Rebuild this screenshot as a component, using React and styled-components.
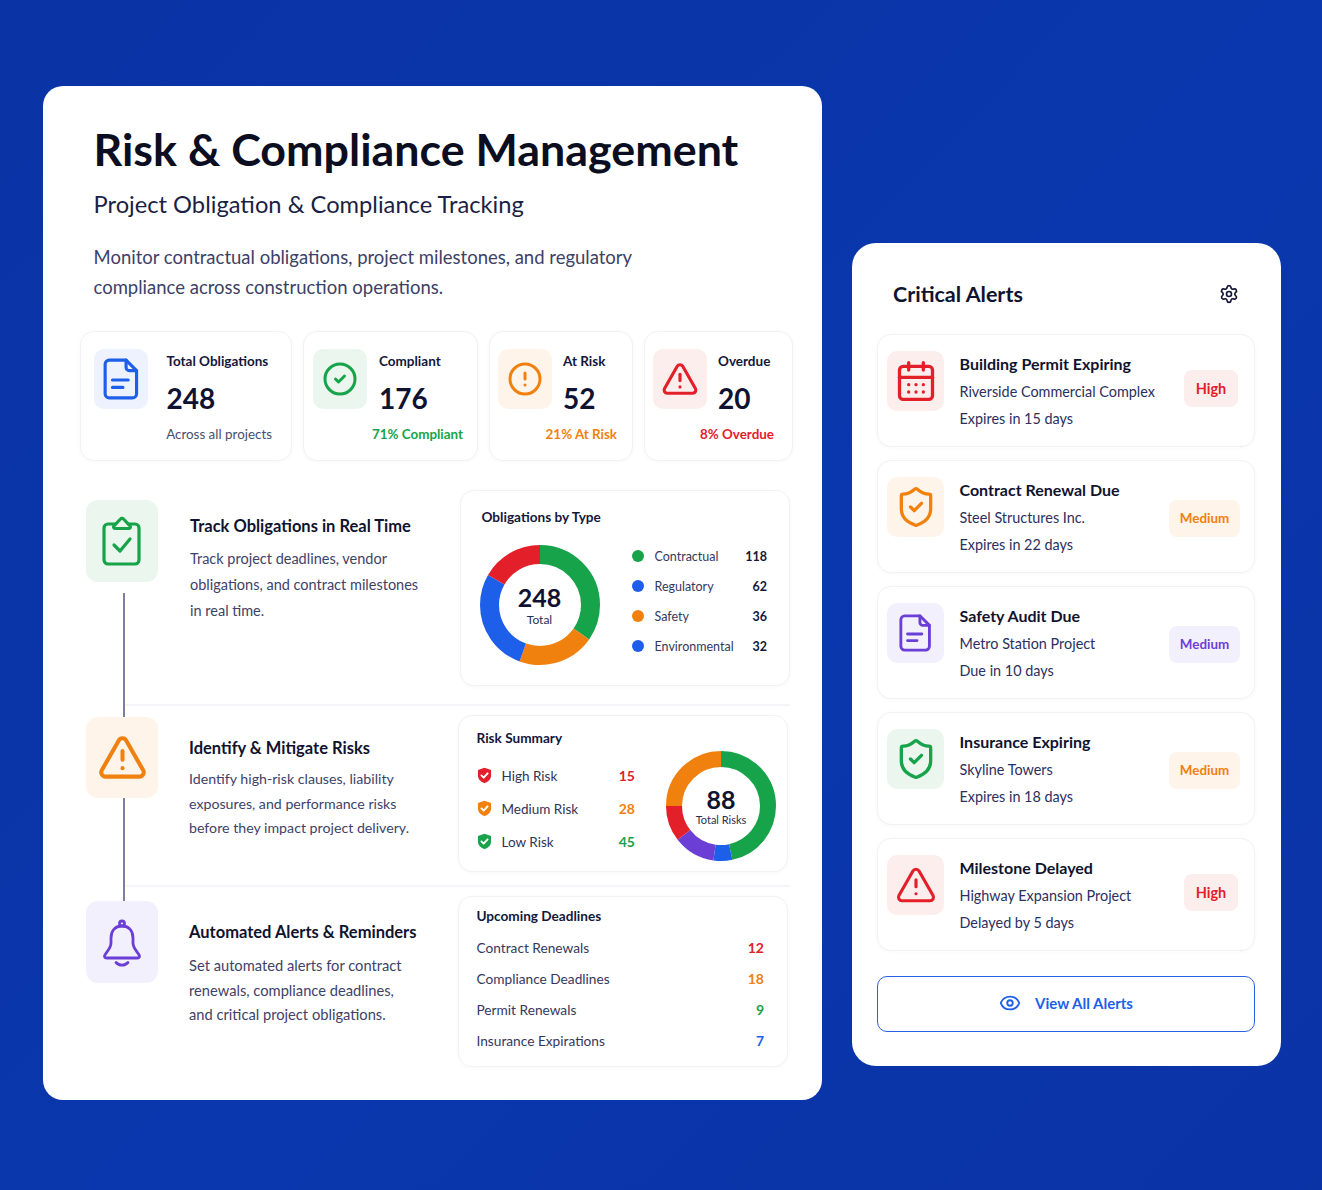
import React from 'react'
import styled, { createGlobalStyle } from 'styled-components'
import {
  CircleCheck, CircleAlert, TriangleAlert, CalendarDays, ShieldCheck, Settings, Eye,
} from 'lucide-react'

const GREEN = '#16a34a'
const BLUE = '#1d5fe8'
const ORANGE = '#f0810f'
const RED = '#e3202a'
const PURPLE = '#6b3fd6'

const tints = {
  blue: '#edf2fe',
  green: '#ebf6ef',
  orange: '#fef4ea',
  red: '#fdeeee',
  purple: '#f3f0fd',
}

function DocIcon({ size, color }) {
  return (
    <svg width={(size * 36) / 42} height={size} viewBox="0 0 36 42" fill="none" stroke={color} strokeWidth="3" strokeLinecap="round" strokeLinejoin="round">
      <path d="M7 3h16l10 10v22a4 4 0 0 1-4 4H7a4 4 0 0 1-4-4V7a4 4 0 0 1 4-4Z" />
      <path d="M23 3v7a3 3 0 0 0 3 3h7" />
      <path d="M10 22h15M10 29h10" />
    </svg>
  )
}

function ClipboardIcon({ color, tile }) {
  return (
    <svg width="50" height="50" viewBox="0 0 50 50" fill="none" stroke={color} strokeWidth="3.200" strokeLinecap="round" strokeLinejoin="round">
      <rect x="7" y="8" width="35" height="40" rx="4" />
      <path d="M18 12.500h14a1.500 1.500 0 0 0 1-2.600L26.500 3a2 2 0 0 0-3 0L17 9.900a1.500 1.500 0 0 0 1 2.600Z" fill={tile} />
      <path d="m17 29 6 6 10-12" />
    </svg>
  )
}

function BellIcon({ color }) {
  return (
    <svg width="50" height="50" viewBox="0 0 50 50" fill="none" stroke={color} strokeWidth="2.800" strokeLinecap="round" strokeLinejoin="round">
      <circle cx="25" cy="6.500" r="2.500" />
      <path d="M25 9c-8 0-11 6-11 12v5c0 6-6 10-6.500 13-.2 1.500 1 2 2.500 2h30c1.500 0 2.700-.5 2.500-2-.5-3-6.500-7-6.500-13v-5c0-6-3-12-11-12Z" />
      <path d="M19 45.500c3 3.500 9 3.500 12 0" />
    </svg>
  )
}

const stats = [
  { Icon: DocIcon, size: 44, color: BLUE, tint: 'blue', label: 'Total Obligations', value: '248', foot: 'Across all projects', footColor: '#4a4e6e', pad: 13, gap: 18.5, right: 19 },
  { Icon: CircleCheck, size: 36, color: GREEN, tint: 'green', label: 'Compliant', value: '176', foot: '71% Compliant', footColor: GREEN, pad: 9, gap: 12, right: 14 },
  { Icon: CircleAlert, size: 36, color: ORANGE, tint: 'orange', label: 'At Risk', value: '52', foot: '21% At Risk', footColor: ORANGE, pad: 8, gap: 11, right: 15 },
  { Icon: TriangleAlert, size: 38, color: RED, tint: 'red', label: 'Overdue', value: '20', foot: '8% Overdue', footColor: RED, pad: 8, gap: 11, right: 18 },
]

const legend = [
  { label: 'Contractual', value: 118, color: GREEN },
  { label: 'Regulatory', value: 62, color: BLUE },
  { label: 'Safety', value: 36, color: ORANGE },
  { label: 'Environmental', value: 32, color: BLUE },
]

const risks = [
  { label: 'High Risk', value: 15, color: RED },
  { label: 'Medium Risk', value: 28, color: ORANGE },
  { label: 'Low Risk', value: 45, color: GREEN },
]

const deadlines = [
  { label: 'Contract Renewals', value: 12, color: RED },
  { label: 'Compliance Deadlines', value: 18, color: ORANGE },
  { label: 'Permit Renewals', value: 9, color: GREEN },
  { label: 'Insurance Expirations', value: 7, color: BLUE },
]

const alerts = [
  { Icon: CalendarDays, size: 44, color: RED, tint: 'red', title: 'Building Permit Expiring', place: 'Riverside Commercial Complex', due: 'Expires in 15 days', level: 'High', levelColor: RED },
  { Icon: ShieldCheck, size: 44, color: ORANGE, tint: 'orange', title: 'Contract Renewal Due', place: 'Steel Structures Inc.', due: 'Expires in 22 days', level: 'Medium', levelColor: ORANGE },
  { Icon: DocIcon, size: 40, color: PURPLE, tint: 'purple', title: 'Safety Audit Due', place: 'Metro Station Project', due: 'Due in 10 days', level: 'Medium', levelColor: PURPLE },
  { Icon: ShieldCheck, size: 44, color: GREEN, tint: 'green', title: 'Insurance Expiring', place: 'Skyline Towers', due: 'Expires in 18 days', level: 'Medium', levelColor: ORANGE, badgeTint: 'orange' },
  { Icon: TriangleAlert, size: 42, color: RED, tint: 'red', title: 'Milestone Delayed', place: 'Highway Expansion Project', due: 'Delayed by 5 days', level: 'High', levelColor: RED },
]

function Donut({ size, width, segments, children }) {
  const r = (size - width) / 2
  return (
    <DonutWrap $size={size}>
      <svg width={size} height={size} viewBox={`0 0 ${size} ${size}`}>
        {segments.map((s) => (
          <circle
            key={s.from}
            cx={size / 2}
            cy={size / 2}
            r={r}
            fill="none"
            stroke={s.color}
            strokeWidth={width}
            pathLength="360"
            strokeDasharray={`${s.to - s.from} 360`}
            strokeDashoffset={-s.from}
            transform={`rotate(-90 ${size / 2} ${size / 2})`}
          />
        ))}
      </svg>
      <DonutCenter>{children}</DonutCenter>
    </DonutWrap>
  )
}

function RiskShield({ color }) {
  return (
    <svg width="15" height="17" viewBox="0 0 16 18">
      <path d="M8 .8 15 3.200v5.600c0 4.200-3 7-7 8.400-4-1.400-7-4.200-7-8.400V3.200z" fill={color} />
      <path d="m4.700 8.900 2.400 2.400 4.200-4.600" fill="none" stroke="#fff" strokeWidth="2" strokeLinecap="round" strokeLinejoin="round" />
    </svg>
  )
}

export default function App() {
  return (
    <Page>
      <GlobalStyle />
      <MainCard>
        <Heading>
          <Title>Risk &amp; Compliance Management</Title>
          <Subtitle>Project Obligation &amp; Compliance Tracking</Subtitle>
          <Intro>
            Monitor contractual obligations, project milestones, and regulatory
            <br />
            compliance across construction operations.
          </Intro>
        </Heading>

        <StatGrid>
          {stats.map((s) => (
            <StatCard key={s.label} $pad={s.pad} $right={s.right}>
              <StatTop $gap={s.gap}>
                <IconTile $tint={s.tint} $w={54} $h={60} $radius={10}>
                  <s.Icon size={s.size} color={s.color} strokeWidth={2} />
                </IconTile>
                <div>
                  <StatLabel>{s.label}</StatLabel>
                  <StatValue>{s.value}</StatValue>
                </div>
              </StatTop>
              <StatFoot $color={s.footColor}>{s.foot}</StatFoot>
            </StatCard>
          ))}
        </StatGrid>

        <Rows>
          <Row $divider>
            <IconColumn $top={10}>
              <IconTile $tint="green" $w={72} $h={82} $radius={12}>
                <ClipboardIcon color={GREEN} tile={tints.green} />
              </IconTile>
              <Connector $offset={11} />
            </IconColumn>
            <RowBody $bottom={20}>
              <RowText $top={24} $left={32} $lh={26} $size={14.5}>
                <RowTitle $gap={8}>Track Obligations in Real Time</RowTitle>
                <p>
                  Track project deadlines, vendor
                  <br />
                  obligations, and contract milestones
                  <br />
                  in real time.
                </p>
              </RowText>
              <Panel $right={3} $h={196} $top={17}>
                <PanelTitle $inset>Obligations by Type</PanelTitle>
                <ChartRow>
                  <Donut
                    size={120}
                    width={19}
                    segments={[
                      { from: 0, to: 125, color: GREEN },
                      { from: 125, to: 200, color: ORANGE },
                      { from: 200, to: 300, color: BLUE },
                      { from: 300, to: 360, color: RED },
                    ]}
                  >
                    <DonutNumber>248</DonutNumber>
                    <DonutCaption>Total</DonutCaption>
                  </Donut>
                  <Legend>
                    {legend.map((l) => (
                      <LegendRow key={l.label}>
                        <Dot $color={l.color} />
                        <span>{l.label}</span>
                        <LegendValue>{l.value}</LegendValue>
                      </LegendRow>
                    ))}
                  </Legend>
                </ChartRow>
              </Panel>
            </RowBody>
          </Row>

          <Row $divider>
            <IconColumn>
              <Connector $fixed={11} />
              <IconTile $tint="orange" $w={72} $h={81} $radius={12}>
                <TriangleAlert size={51} color={ORANGE} strokeWidth={1.9} />
              </IconTile>
              <Connector />
            </IconColumn>
            <RowBody $top={9} $bottom={15}>
              <RowText $top={21} $left={31} $lh={24.5} $size={14.2}>
                <RowTitle $gap={7}>Identify &amp; Mitigate Risks</RowTitle>
                <p>
                  Identify high-risk clauses, liability
                  <br />
                  exposures, and performance risks
                  <br />
                  before they impact project delivery.
                </p>
              </RowText>
              <Panel $right={5} $h={157} $top={13}>
                <RiskLayout>
                  <RiskColumn>
                    <PanelTitle>Risk Summary</PanelTitle>
                    {risks.map((r) => (
                      <RiskRow key={r.label}>
                        <RiskShield color={r.color} />
                        <span>{r.label}</span>
                        <RowValue $color={r.color}>{r.value}</RowValue>
                      </RiskRow>
                    ))}
                  </RiskColumn>
                  <RiskChart>
                    <Donut
                      size={110}
                      width={16}
                      segments={[
                        { from: 0, to: 168, color: GREEN },
                        { from: 168, to: 188, color: BLUE },
                        { from: 188, to: 232, color: PURPLE },
                        { from: 232, to: 270, color: RED },
                        { from: 270, to: 360, color: ORANGE },
                      ]}
                    >
                      <DonutNumber>88</DonutNumber>
                      <DonutCaption $small>Total Risks</DonutCaption>
                    </Donut>
                  </RiskChart>
                </RiskLayout>
              </Panel>
            </RowBody>
          </Row>

          <Row>
            <IconColumn>
              <Connector $fixed={14} />
              <IconTile $tint="purple" $w={72} $h={82} $radius={12}>
                <BellIcon color={PURPLE} />
              </IconTile>
            </IconColumn>
            <RowBody $top={9}>
              <RowText $top={24} $left={31} $lh={24.5} $size={14.7}>
                <RowTitle $gap={9}>Automated Alerts &amp; Reminders</RowTitle>
                <p>
                  Set automated alerts for contract
                  <br />
                  renewals, compliance deadlines,
                  <br />
                  and critical project obligations.
                </p>
              </RowText>
              <Panel $right={5} $h={171} $top={10}>
                <PanelTitle>Upcoming Deadlines</PanelTitle>
                <DeadlineList>
                  {deadlines.map((d) => (
                    <DeadlineRow key={d.label}>
                      <span>{d.label}</span>
                      <RowValue $color={d.color}>{d.value}</RowValue>
                    </DeadlineRow>
                  ))}
                </DeadlineList>
              </Panel>
            </RowBody>
          </Row>
        </Rows>
      </MainCard>

      <AlertsCard>
        <AlertsHeader>
          <h2>Critical Alerts</h2>
          <Settings size={20} color="#12163a" strokeWidth={2} />
        </AlertsHeader>
        <AlertList>
          {alerts.map((a) => (
            <AlertItem key={a.title}>
              <IconTile $tint={a.tint} $w={57} $h={60} $radius={10}>
                <a.Icon size={a.size} color={a.color} strokeWidth={1.8} />
              </IconTile>
              <AlertText>
                <AlertTitle>{a.title}</AlertTitle>
                <AlertLine>{a.place}</AlertLine>
                <AlertLine>{a.due}</AlertLine>
              </AlertText>
              <Badge $tint={a.badgeTint || a.tint} $color={a.levelColor} $wide={a.level === 'Medium'}>
                {a.level}
              </Badge>
            </AlertItem>
          ))}
        </AlertList>
        <ViewAll type="button">
          <Eye size={22} color={BLUE} strokeWidth={2} />
          View All Alerts
        </ViewAll>
      </AlertsCard>
    </Page>
  )
}

const GlobalStyle = createGlobalStyle`
  html, body {
    margin: 0;
    padding: 0;
    background: #0a34a8;
  }
  body {
    font-family: "Lato", "Noto Sans", sans-serif;
    color: #10132e;
  }
  * {
    box-sizing: border-box;
  }
`
const Page = styled.div`
  width: 1322px;
  height: 1190px;
  overflow: hidden;
  display: flex;
  align-items: flex-start;
  gap: 30px;
  padding: 86px 0 0 43px;
  background: linear-gradient(135deg, #0a33a5 0%, #0a37ad 55%, #0a33a6 100%);
`
const MainCard = styled.section`
  width: 779px;
  height: 1014px;
  flex: none;
  padding: 37px 29px 33px 37px;
  background: #fff;
  border-radius: 20px;
`
const Heading = styled.header`
  padding-left: 13.5px;
  height: 208px;
`
const Title = styled.h1`
  margin: 0;
  font-size: 44.8px;
  line-height: 52px;
  font-weight: 700;
  color: #0b0d20;
`
const Subtitle = styled.h2`
  margin: 13px 0 0;
  font-size: 23.7px;
  line-height: 32px;
  font-weight: 400;
  color: #1b1f45;
`
const Intro = styled.p`
  margin: 22px 0 0;
  font-size: 18.5px;
  line-height: 30px;
  color: #3c4166;
`
const StatGrid = styled.div`
  display: grid;
  grid-template-columns: 212px 175px 144px 149px;
  column-gap: 11px;
`
const StatCard = styled.article`
  height: 130px;
  padding: 17px ${(p) => p.$right}px 0 ${(p) => p.$pad}px;
  display: flex;
  flex-direction: column;
  border: 1.5px solid #f1f2f6;
  border-radius: 14px;
  background: #fff;
  box-shadow: 0 1px 4px rgba(20, 30, 80, 0.03);
`
const StatTop = styled.div`
  display: flex;
  gap: ${(p) => p.$gap}px;
`
const IconTile = styled.div`
  width: ${(p) => p.$w}px;
  height: ${(p) => p.$h}px;
  flex: none;
  display: flex;
  align-items: center;
  justify-content: center;
  border-radius: ${(p) => p.$radius}px;
  background: ${(p) => tints[p.$tint]};
`
const StatLabel = styled.div`
  margin-top: 2px;
  font-size: 13.5px;
  line-height: 20px;
  font-weight: 700;
  white-space: nowrap;
  color: #14173a;
`
const StatValue = styled.div`
  margin-top: 9px;
  font-size: 28px;
  line-height: 36px;
  font-weight: 700;
  color: #0f1230;
`
const StatFoot = styled.div`
  margin-top: 9px;
  align-self: flex-end;
  font-size: 13.4px;
  line-height: 18px;
  font-weight: ${(p) => (p.$color === '#4a4e6e' ? 400 : 700)};
  color: ${(p) => p.$color};
`
const Rows = styled.div`
  margin-top: 29px;
  padding-left: 6px;
`
const Row = styled.div`
  position: relative;
  display: flex;
  ${(p) =>
    p.$divider &&
    `&::after {
      content: '';
      position: absolute;
      left: 39px;
      right: 3px;
      bottom: 0;
      height: 2px;
      background: #f4f5f8;
    }`}
`
const IconColumn = styled.div`
  width: 72px;
  flex: none;
  display: flex;
  flex-direction: column;
  align-items: center;
  padding-top: ${(p) => p.$top || 0}px;
`
const Connector = styled.div`
  width: 1.5px;
  margin-left: 4px;
  margin-top: ${(p) => p.$offset || 0}px;
  background: #7d7f9e;
  ${(p) => (p.$fixed ? `height: ${p.$fixed}px; flex: none;` : 'flex: 1;')}
`
const RowBody = styled.div`
  flex: 1;
  min-width: 0;
  display: flex;
  padding: ${(p) => p.$top || 0}px 0 ${(p) => p.$bottom || 0}px;
`
const RowText = styled.div`
  flex: 1;
  min-width: 0;
  padding: ${(p) => p.$top}px 0 0 ${(p) => p.$left}px;
  font-size: ${(p) => p.$size}px;
  line-height: ${(p) => p.$lh}px;
  color: #3e4268;
  p {
    margin: 0;
  }
`
const RowTitle = styled.h3`
  margin: 0 0 ${(p) => p.$gap}px;
  font-size: 16.5px;
  line-height: 24px;
  font-weight: 700;
  color: #10132e;
`
const Panel = styled.div`
  width: 330px;
  height: ${(p) => p.$h}px;
  flex: none;
  margin-right: ${(p) => p.$right}px;
  padding: ${(p) => p.$top}px 22px 0 17.5px;
  border: 1.5px solid #f1f2f6;
  border-radius: 14px;
  background: #fff;
  box-shadow: 0 1px 4px rgba(20, 30, 80, 0.03);
`
const PanelTitle = styled.h4`
  margin: ${(p) => (p.$inset ? '0 0 0 3px' : 0)};
  font-size: 13.6px;
  line-height: 18px;
  font-weight: 700;
  color: #14173a;
`
const ChartRow = styled.div`
  margin-top: 19px;
  margin-left: 1px;
  display: flex;
  align-items: center;
  gap: 31px;
`
const DonutWrap = styled.div`
  width: ${(p) => p.$size}px;
  height: ${(p) => p.$size}px;
  flex: none;
  display: grid;
  place-items: center;
  svg {
    grid-area: 1 / 1;
  }
`
const DonutCenter = styled.div`
  grid-area: 1 / 1;
  text-align: center;
`
const DonutNumber = styled.div`
  font-size: 25px;
  line-height: 28px;
  font-weight: 700;
  color: #0f1230;
`
const DonutCaption = styled.div`
  margin-top: ${(p) => (p.$small ? -1 : 1)}px;
  font-size: ${(p) => (p.$small ? 11 : 12)}px;
  line-height: 16px;
  color: #2a2e50;
`
const Legend = styled.div`
  flex: 1;
  margin-top: -8px;
  margin-left: 1px;
`
const LegendRow = styled.div`
  height: 30px;
  display: grid;
  grid-template-columns: 12px 1fr auto;
  column-gap: 11px;
  align-items: center;
  font-size: 12.5px;
  color: #34385c;
`
const Dot = styled.i`
  width: 12px;
  height: 12px;
  border-radius: 50%;
  background: ${(p) => p.$color};
`
const LegendValue = styled.span`
  font-weight: 700;
  color: #14173a;
`
const RiskLayout = styled.div`
  display: flex;
  align-items: flex-start;
  gap: 31px;
  margin-right: -11px;
`
const RiskColumn = styled.div`
  flex: 1;
`
const RiskChart = styled.div`
  margin-top: 22px;
`
const RiskRow = styled.div`
  height: 33px;
  display: grid;
  grid-template-columns: 15px 1fr auto;
  column-gap: 10px;
  align-items: center;
  font-size: 13.5px;
  color: #2f3357;
  &:first-of-type {
    margin-top: 12px;
  }
`
const RowValue = styled.span`
  font-size: 14px;
  font-weight: 700;
  color: ${(p) => p.$color};
`
const DeadlineList = styled.div`
  margin-top: 7px;
  margin-right: 1px;
`
const DeadlineRow = styled.div`
  height: 31px;
  display: flex;
  align-items: center;
  justify-content: space-between;
  font-size: 13.7px;
  color: #34385c;
`
const AlertsCard = styled.aside`
  width: 429px;
  height: 823px;
  flex: none;
  margin-top: 157px;
  padding: 0 26px 0 25px;
  background: #fff;
  border-radius: 24px;
`
const AlertsHeader = styled.div`
  height: 91px;
  padding: 10px 16px 0;
  display: flex;
  align-items: center;
  justify-content: space-between;
  h2 {
    margin: 0;
    font-size: 21.5px;
    font-weight: 700;
    color: #10132e;
  }
`
const AlertList = styled.div`
  display: flex;
  flex-direction: column;
  gap: 13px;
`
const AlertItem = styled.article`
  height: 113px;
  padding: 16px 15px 0 9px;
  display: flex;
  border: 1.5px solid #f1f2f6;
  border-radius: 14px;
  background: #fff;
  box-shadow: 0 1px 4px rgba(20, 30, 80, 0.03);
`
const AlertText = styled.div`
  flex: 1;
  min-width: 0;
  padding: 2px 0 0 15.5px;
`
const AlertTitle = styled.div`
  margin-bottom: 3px;
  font-size: 16px;
  line-height: 22px;
  font-weight: 700;
  color: #10132e;
`
const AlertLine = styled.div`
  font-size: 14.4px;
  line-height: 27px;
  color: #2c3060;
`
const Badge = styled.span`
  width: ${(p) => (p.$wide ? 71 : 54)}px;
  height: 37px;
  margin: ${(p) => (p.$wide ? 22.5 : 19)}px ${(p) => (p.$wide ? -1 : 1)}px 0 0;
  flex: none;
  display: flex;
  align-items: center;
  justify-content: center;
  border-radius: 8px;
  font-size: ${(p) => (p.$wide ? 13.4 : 14.5)}px;
  font-weight: 700;
  color: ${(p) => p.$color};
  background: ${(p) => tints[p.$tint]};
`
const ViewAll = styled.button`
  width: 100%;
  height: 56px;
  margin-top: 25px;
  padding: 0 0 2px;
  display: flex;
  align-items: center;
  justify-content: center;
  gap: 14px;
  border: 1.5px solid #2a62e6;
  border-radius: 10px;
  background: #fff;
  font-family: inherit;
  font-size: 15px;
  font-weight: 700;
  color: ${BLUE};
`
